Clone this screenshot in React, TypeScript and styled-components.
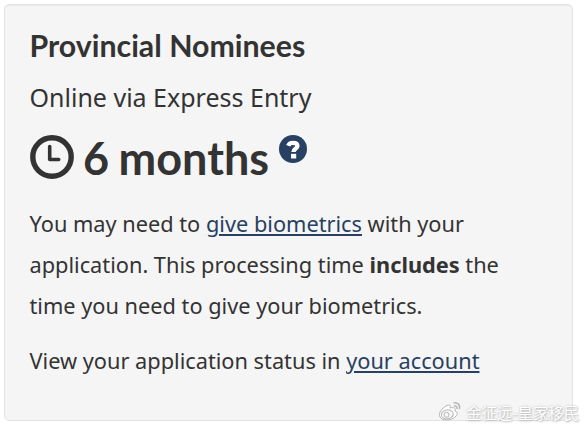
import React from "react";
import styled, { createGlobalStyle } from "styled-components";

const GlobalStyle = createGlobalStyle`
  * { box-sizing: border-box; }
  body { margin: 0; background: #fff; overflow: hidden; }
`;

const Page = styled.main`
  width: 585px;
  height: 426px;
  padding: 4px;
  position: relative;
  color: #333;
  font-family: "Noto Sans", sans-serif;
`;

const Card = styled.section`
  width: 569px;
  height: 417px;
  padding: 20px 24px 0 24.5px;
  background: #f5f5f5;
  border: 1px solid #e3e3e3;
  border-radius: 5px;
  box-shadow: inset 0 1px 1px rgba(0, 0, 0, 0.05);
  white-space: nowrap;
`;

const Title = styled.h2`
  margin: 0;
  height: 40px;
  font: 700 30.3px/40px Lato, sans-serif;
`;

const Subtitle = styled.p`
  margin: 12px 0 0;
  height: 40px;
  font-size: 25px;
  line-height: 40px;
`;

const Estimate = styled.div`
  display: flex;
  align-items: flex-start;
  height: 50px;
  margin-top: 14px;
`;

const ClockIcon = styled.svg`
  width: 44px;
  height: 44px;
  margin-top: 3.5px;
  flex: none;
`;

const Duration = styled.strong`
  margin: 2px 0 0 9.5px;
  font: 700 45px/50px Lato, sans-serif;
  word-spacing: -1.5px;
`;

const HelpIcon = styled.svg`
  width: 28px;
  height: 28px;
  margin: 4px 0 0 9.5px;
  flex: none;
`;

const Paragraph = styled.p`
  margin: 0 0 14px;
  font-size: 21.75px;
  line-height: 41px;
`;

const Details = styled.div`
  margin-top: 22px;
`;

const Link = styled.a`
  color: #284162;
  text-decoration: underline;
  text-decoration-thickness: 2px;
  text-underline-offset: 2px;
`;

const Watermark = styled.div`
  position: absolute;
  left: 438px;
  top: 400px;
  display: flex;
  align-items: center;
  gap: 4px;
  color: #fff;
  font: 15.4px/24px "Noto Sans CJK SC", sans-serif;
  white-space: nowrap;
  text-shadow: 0 0 2px #bbb, 1px 1px 2px #bbb;
`;

const WeiboIcon = styled.svg`
  width: 24px;
  height: 22px;
  flex: none;
`;

export default function App() {
  return (
    <Page>
      <GlobalStyle />
      <Card>
        <Title>Provincial Nominees</Title>
        <Subtitle>Online via Express Entry</Subtitle>
        <Estimate>
          <ClockIcon viewBox="0 0 44 44" fill="none" stroke="#333">
            <circle cx="22" cy="22" r="19.2" strokeWidth="5.4" />
            <path d="M19.7 11.5v13h9" strokeWidth="3.6" strokeLinecap="round" strokeLinejoin="round" />
          </ClockIcon>
          <Duration>6 months</Duration>
          <HelpIcon viewBox="0 0 28 28">
            <circle cx="14" cy="14" r="14" fill="#284162" />
            <path d="M9.2 10.8C10 8.700 11.700 7.900 14 7.900c2.700 0 4.400 1.200 4.400 3 0 2.900-3.900 2.900-3.900 6" fill="none" stroke="#fff" strokeWidth="4.400" />
            <path d="M12 18.800h5.200v4.700H12z" fill="#fff" />
          </HelpIcon>
        </Estimate>
        <Details>
          <Paragraph>
            You may need to <Link>give biometrics</Link> with your<br />
            application. This processing time <b>includes</b> the<br />
            time you need to give your biometrics.
          </Paragraph>
          <Paragraph>
            View your application status in <Link>your account</Link>
          </Paragraph>
        </Details>
      </Card>
      <Watermark>
        <WeiboIcon viewBox="0 0 24 22" fill="none" stroke="#b5b5b5" strokeWidth="1">
          <path d="M8 5c3-2 5-1 4 2 4-1 6 0 5 3 3 1 3 4 0 6-4 4-13 4-15 0C0 12 4 7 8 5z" fill="#fff" />
          <ellipse cx="9.2" cy="13.4" rx="6" ry="4.5" transform="rotate(-8 9 13)" fill="#f8f8f8" />
          <circle cx="8.5" cy="13.8" r="2.5" />
          <path d="M15.500 2c4-1 7 2 6 6M16 5c2-.5 3.500 1 3 3" strokeWidth="1.500" />
        </WeiboIcon>
        <span>金征远-皇家移民</span>
      </Watermark>
    </Page>
  );
}
